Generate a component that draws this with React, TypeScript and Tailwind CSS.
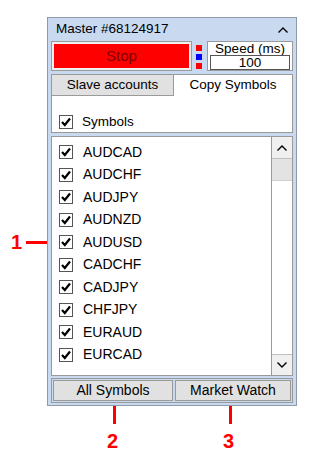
import React from 'react';

const symbols = ['AUDCAD', 'AUDCHF', 'AUDJPY', 'AUDNZD', 'AUDUSD', 'CADCHF', 'CADJPY', 'CHFJPY', 'EURAUD', 'EURCAD'];

const CheckBox: React.FC = () => (
  <div className="w-[14px] h-[14px] border border-[#555] bg-white flex items-center justify-center shrink-0">
    <svg width="12" height="12" viewBox="0 0 12 12">
      <path d="M2 6 L4.8 9 L10 2.5" fill="none" stroke="#000" strokeWidth="2.2" />
    </svg>
  </div>
);

const Chevron: React.FC<{ down?: boolean }> = ({ down }) => (
  <svg width="12" height="8" viewBox="0 0 12 8">
    <path d={down ? 'M1.5 1.5 L6 6 L10.5 1.5' : 'M1.5 6.5 L6 2 L10.5 6.5'} fill="none" stroke="#000" strokeWidth="1.4" />
  </svg>
);

export default function App() {
  return (
    <div className="relative w-[311px] h-[458px] bg-white text-black" style={{ fontFamily: '"Liberation Sans", Arial, sans-serif' }}>
      <div className="absolute left-0 top-0 w-full h-full pointer-events-none">
        {/* annotation 1 */}
        <div className="absolute left-[11px] top-[232px] text-[20px] font-bold text-[#ff0000] leading-none">1</div>
        <div className="absolute left-[26px] top-[241px] w-[32px] h-[3px] bg-[#ff0000]" />
        {/* annotation 2 */}
        <div className="absolute left-[113px] top-[399px] w-[3px] h-[25px] bg-[#ff0000]" />
        <div className="absolute left-[107px] top-[431px] text-[20px] font-bold text-[#ff0000] leading-none">2</div>
        {/* annotation 3 */}
        <div className="absolute left-[229px] top-[399px] w-[3px] h-[25px] bg-[#ff0000]" />
        <div className="absolute left-[223px] top-[431px] text-[20px] font-bold text-[#ff0000] leading-none">3</div>
      </div>

      <div className="absolute left-[47px] top-[17px] w-[250px] h-[389px] bg-[#c9daf0] border border-[#8f99a8] flex flex-col text-[13px]">
        <div className="h-[23px] flex items-center justify-between pl-[8px] pr-[7px]">
          <span className="text-[13.5px]">Master #68124917</span>
          <Chevron />
        </div>

        <div className="h-[33px] flex px-[3px] gap-[4px]">
          <div className="w-[141px] h-[30px] border border-[#9a9a9a] bg-[#f0f0f0] p-[2px]">
            <div className="w-full h-full bg-[#ff0000] flex items-center justify-center text-[15px] text-[#800000]">Stop</div>
          </div>
          <div className="flex flex-col gap-[3px] pt-[4px] w-[7px]">
            <div className="w-[6px] h-[6px] bg-[#ff0000]" />
            <div className="w-[6px] h-[6px] bg-[#0000ff]" />
            <div className="w-[6px] h-[6px] bg-[#ff0000]" />
          </div>
          <div className="flex-1 h-[30px] border border-[#9a9a9a] bg-white flex flex-col items-center px-[2px]">
            <div className="h-[13px] leading-[14px] text-[13.5px]">Speed (ms)</div>
            <div className="w-full h-[15px] border border-[#555] text-center leading-[13px] text-[13.5px]">100</div>
          </div>
        </div>

        <div className="mx-[3px] h-[59px] border border-[#9a9a9a] bg-white flex flex-col">
          <div className="h-[21px] flex bg-[#c9daf0]">
            <div className="w-[122px] h-full bg-[#e1e1e1] border-r border-b border-[#9a9a9a] flex items-center justify-center text-[13.5px]">Slave accounts</div>
            <div className="flex-1 h-full bg-white flex items-center justify-center text-[13.5px]">Copy Symbols</div>
          </div>
          <div className="flex-1 flex items-end pb-[3px] pl-[7px] gap-[9px]">
            <CheckBox />
            <span className="leading-[14px] text-[13.5px]">Symbols</span>
          </div>
        </div>

        <div className="mx-[3px] mt-[3px] h-[240px] border border-[#9a9a9a] bg-white flex">
          <div className="flex-1 pt-[4px] overflow-hidden">
            {symbols.map((s) => (
              <div key={s} className="h-[22.5px] flex items-center pl-[7px] gap-[10px]">
                <CheckBox />
                <span className="text-[14px]">{s}</span>
              </div>
            ))}
          </div>
          <div className="w-[21px] border-l border-[#9a9a9a] flex flex-col">
            <div className="h-[22px] bg-[#f0f0f0] border-b border-[#c0c0c0] flex items-center justify-center">
              <Chevron />
            </div>
            <div className="h-[22px] bg-[#e3e3e3] border-b border-[#d0d0d0]" />
            <div className="flex-1 bg-white" />
            <div className="h-[21px] bg-[#f0f0f0] border-t border-[#c0c0c0] flex items-center justify-center">
              <Chevron down />
            </div>
          </div>
        </div>

        <div className="mx-[3px] mt-[2px] h-[25px] flex gap-[2px] border border-[#9a9a9a] p-[1px]">
          <div className="w-[120px] h-full bg-[#e1e1e1] border border-[#9a9a9a] flex items-center justify-center text-[14px]">All Symbols</div>
          <div className="flex-1 h-full bg-[#e1e1e1] border border-[#9a9a9a] flex items-center justify-center text-[14px]">Market Watch</div>
        </div>
      </div>
    </div>
  );
}
